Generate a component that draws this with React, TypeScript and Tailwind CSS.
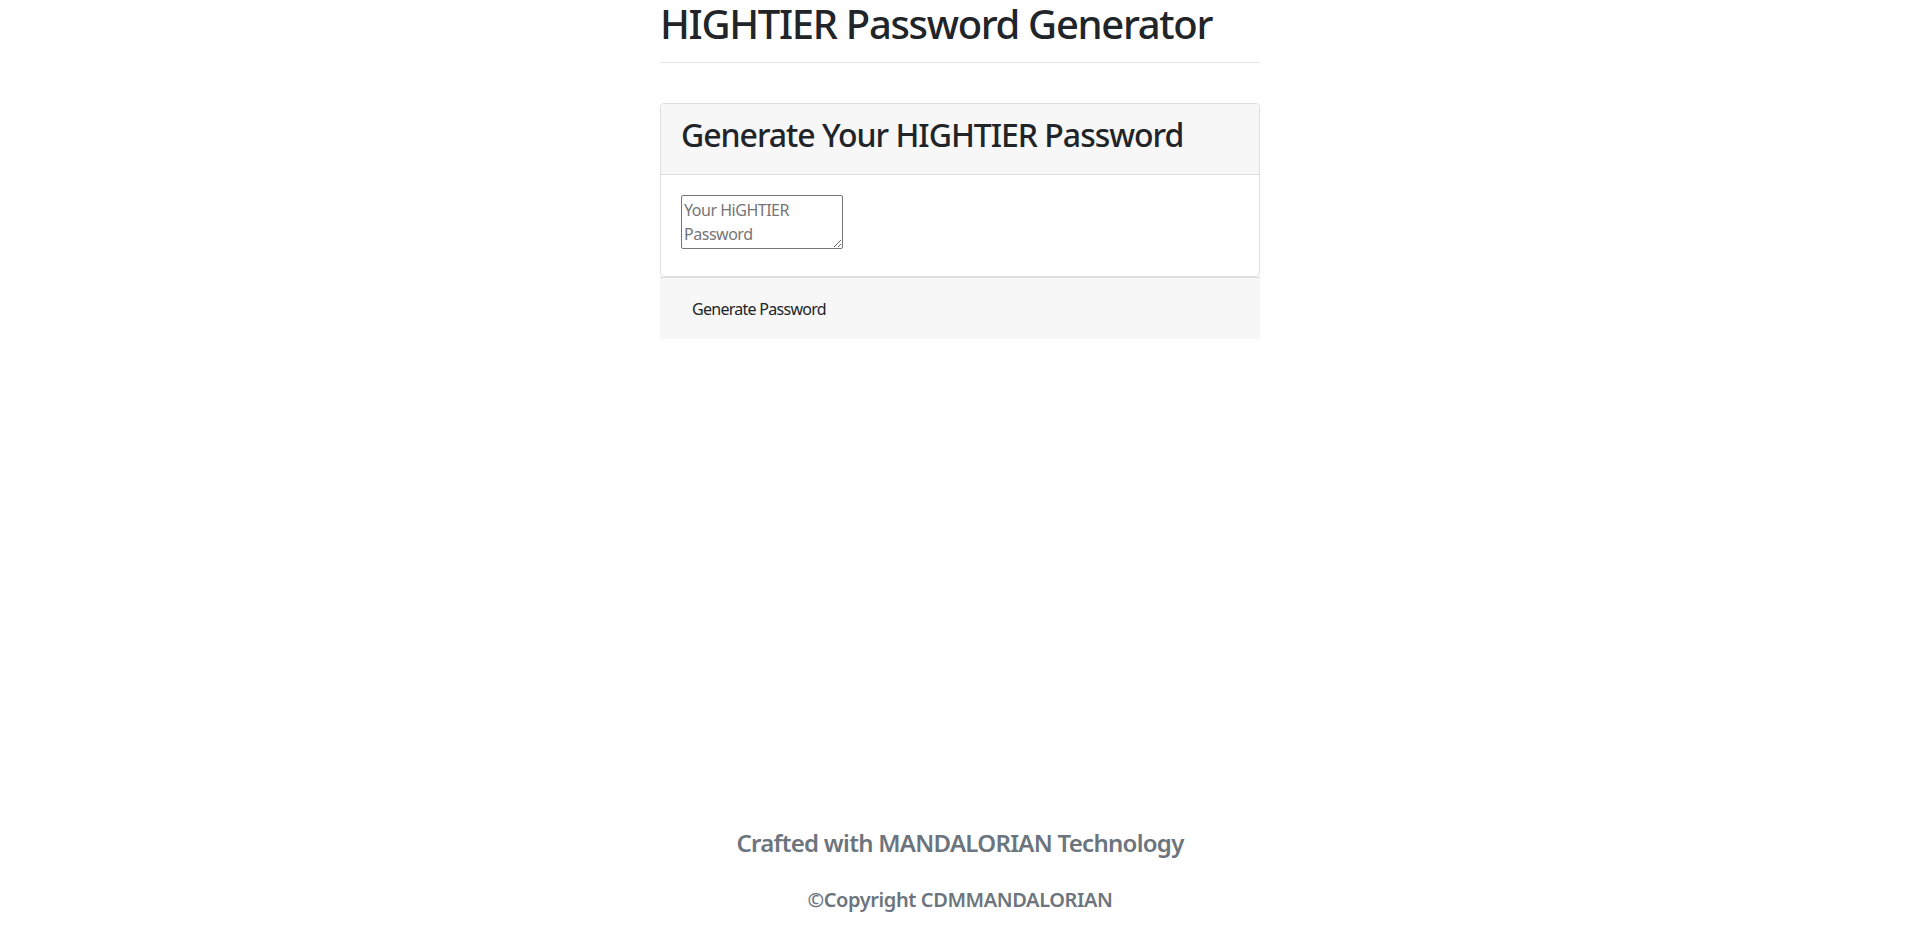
export default function App() {
  return (
    <div
      className="min-h-screen flex flex-col bg-white text-[#212529]"
      style={{ fontFamily: '"Noto Sans", "Open Sans", sans-serif' }}
    >
      <main className="w-[600px] mx-auto">
        {/* Page title */}
        <h1 className="text-[40px] leading-[48px] font-medium tracking-[-0.033em] pb-[14px] border-b border-[#e5e5e5]">
          HIGHTIER Password Generator
        </h1>

        {/* Card */}
        <div className="mt-[40px] border border-[#dfdfdf] rounded-[4px]">
          <div className="bg-[#f7f7f7] px-5 py-3 border-b border-[#dfdfdf] rounded-t-[4px]">
            <h2 className="text-[32px] leading-[38px] font-medium tracking-[-0.032em] mb-2">
              Generate Your HIGHTIER Password
            </h2>
          </div>
          <div className="px-5 pt-5 pb-[27px]">
            <textarea
              rows={2}
              placeholder="Your HiGHTIER Password"
              className="block w-[162px] h-[54px] border border-[#767676] rounded-[2px] p-[2px] text-[16px] leading-[24px] tracking-[-0.03em] placeholder:text-[#757575] outline-none"
            />
          </div>
        </div>

        {/* Footer with action */}
        <div className="bg-[#f7f7f7] border-t border-[#dfdfdf] px-5 pt-[13px] pb-3">
          <button className="px-3 py-1.5 text-[16px] leading-[24px] tracking-[-0.045em] text-[#212529]">
            Generate Password
          </button>
        </div>
      </main>

      <footer className="mt-auto pb-[22px] text-center text-[#6c757d]">
        <h4 className="text-[24px] leading-[29px] font-semibold tracking-[-0.03em] mb-[31px]">
          Crafted with MANDALORIAN Technology
        </h4>
        <h5 className="text-[20px] leading-[24px] font-semibold tracking-[-0.02em]">
          ©Copyright CDMMANDALORIAN
        </h5>
      </footer>
    </div>
  )
}
